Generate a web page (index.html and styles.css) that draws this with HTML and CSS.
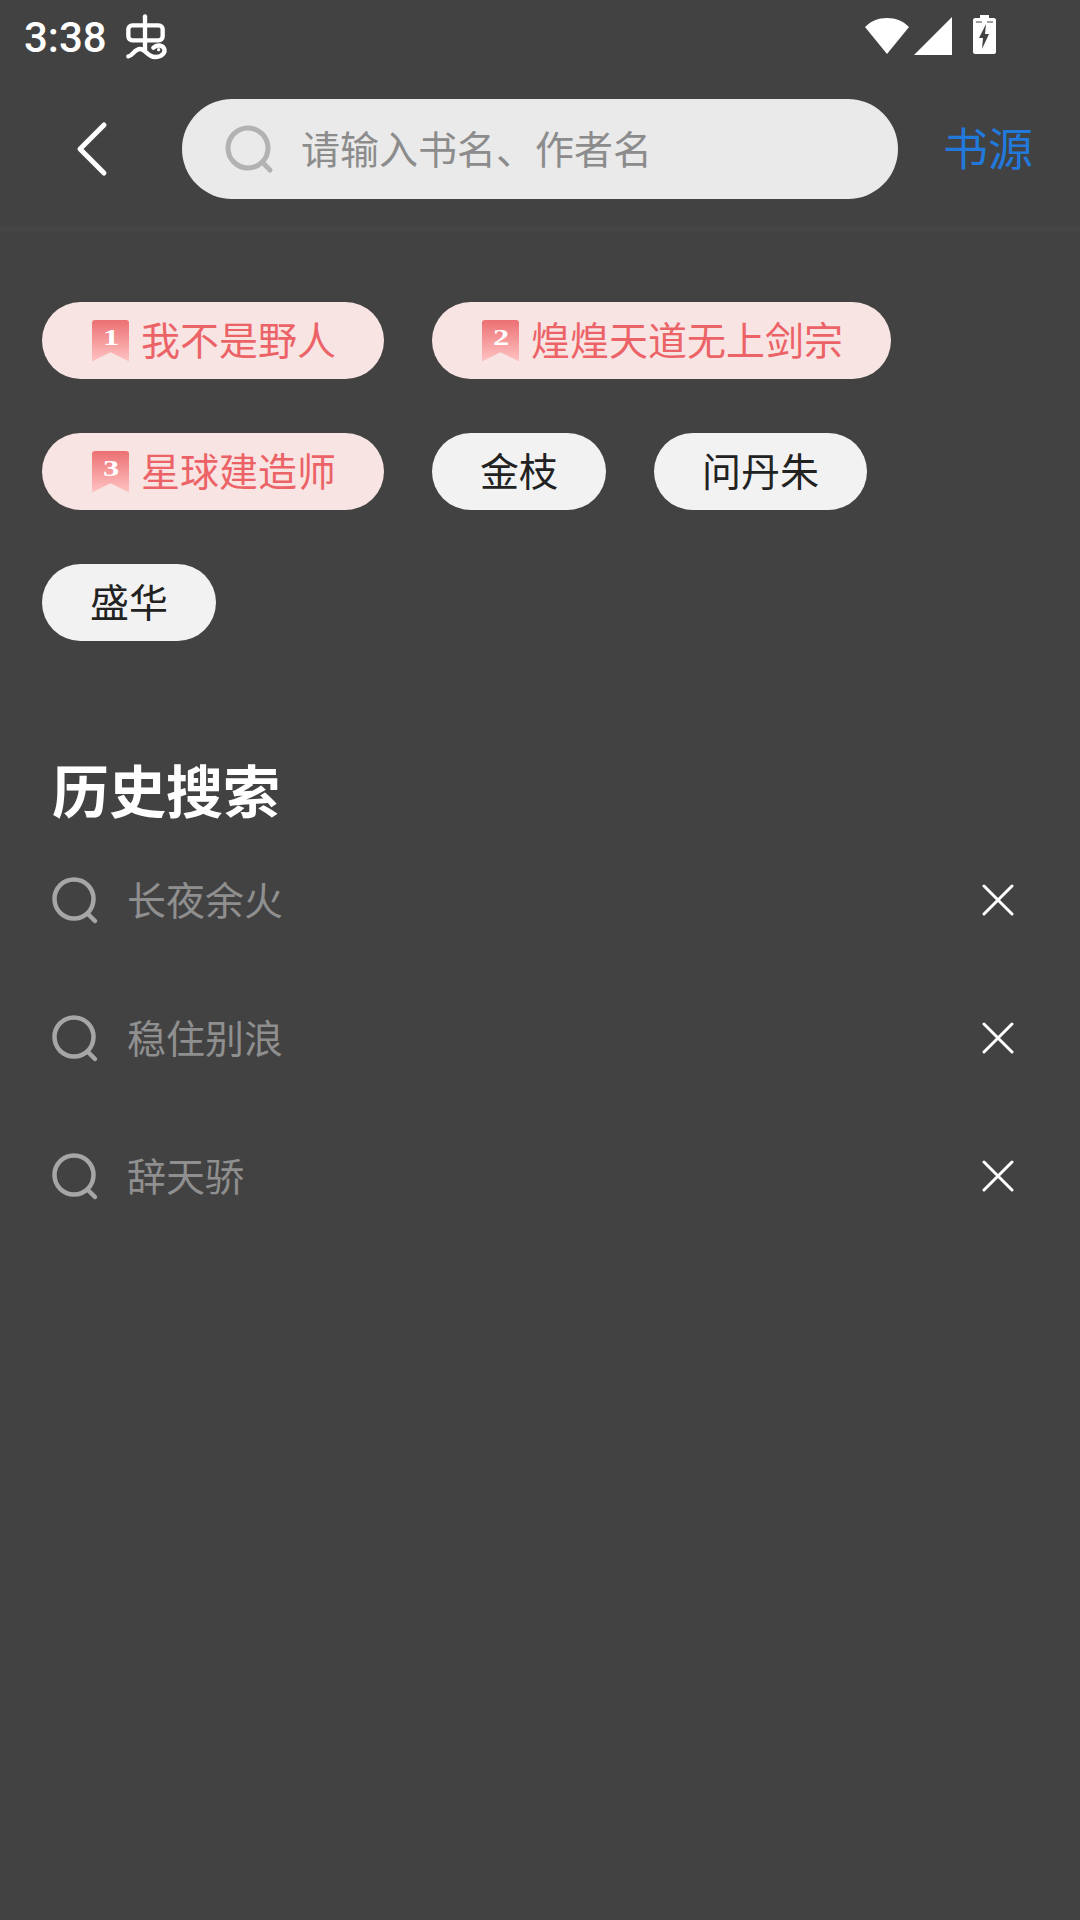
FILE: index.html
```html
<!DOCTYPE html>
<html lang="zh-CN">

<head>
    <meta charset="UTF-8">
    <meta name="viewport" content="width=device-width, initial-scale=1.0">
    <title>搜索</title>
    <link rel="stylesheet" href="styles.css">
</head>

<body>
    <div class="status-bar">
        <span class="clock">3:38</span>
        <svg class="bug-icon" viewBox="0 0 180 180" width="60" height="60" fill="none" stroke="#fff" stroke-width="13" stroke-linecap="round" stroke-linejoin="round">
            <rect x="55" y="55" width="103" height="45" rx="12"/>
            <path d="M105 28V128"/>
            <path d="M55 148C68 146 74 126 90 126C108 126 112 150 135 150C156 150 168 136 162 124C157 114 140 112 130 122"/>
            <circle cx="146" cy="128" r="3" fill="#fff" stroke-width="4"/>
        </svg>
        <div class="status-icons">
            <svg width="46" height="40" viewBox="0 0 46 40" fill="#fff">
                <path d="M1 11C7 5 14 2 23 2C32 2 39 5 45 11L23 38Z"/>
            </svg>
            <svg width="38" height="38" viewBox="0 0 38 38" fill="#fff">
                <path d="M38 0V38H0Z"/>
            </svg>
            <svg class="battery" width="23" height="39" viewBox="0 0 23 39">
                <path fill="#fff" d="M7 0H16V3H21C22 3 23 4 23 5V37C23 38 22 39 21 39H2C1 39 0 38 0 37V5C0 4 1 3 2 3H7Z"/>
                <path fill="#424242" d="M13 9L6 23H10L9 34L16 19H12Z"/>
                <path stroke="#424242" stroke-width="1" d="M3 7H9M14 7H20"/>
            </svg>
        </div>
    </div>

    <header class="search-header">
        <svg class="back-icon" width="34" height="56" viewBox="0 0 34 56" fill="none" stroke="#fff" stroke-width="5" stroke-linecap="round" stroke-linejoin="round">
            <path d="M29 4L5 28L29 52"/>
        </svg>
        <div class="search-box">
            <svg width="50" height="50" viewBox="0 0 50 50" fill="none" stroke="#b2b2b2" stroke-width="5" stroke-linecap="round">
                <circle cx="24" cy="24" r="20"/>
                <path d="M39 39L46 46"/>
            </svg>
            <span class="search-placeholder">请输入书名、作者名</span>
        </div>
        <span class="source-link">书源</span>
    </header>
    <div class="header-shadow"></div>

    <section class="hot-list">
        <span class="chip chip-rank"><span class="rank"><b>1</b></span>我不是野人</span>
        <span class="chip chip-rank"><span class="rank"><b>2</b></span>煌煌天道无上剑宗</span>
        <span class="chip chip-rank"><span class="rank"><b>3</b></span>星球建造师</span>
        <span class="chip">金枝</span>
        <span class="chip">问丹朱</span>
        <span class="chip">盛华</span>
    </section>

    <h2 class="history-title">历史搜索</h2>
    <ul class="history-list">
        <li class="history-row">
            <svg width="50" height="50" viewBox="0 0 50 50" fill="none" stroke="#a6a6a6" stroke-width="4.5" stroke-linecap="round">
                <circle cx="25" cy="24" r="19.5"/>
                <path d="M39 39L46 46"/>
            </svg>
            <span class="history-text">长夜余火</span>
            <svg class="close-icon" width="32" height="32" viewBox="0 0 32 32" stroke="#fff" stroke-width="3" stroke-linecap="round">
                <path d="M2 2L30 30M30 2L2 30"/>
            </svg>
        </li>
        <li class="history-row">
            <svg width="50" height="50" viewBox="0 0 50 50" fill="none" stroke="#a6a6a6" stroke-width="4.5" stroke-linecap="round">
                <circle cx="25" cy="24" r="19.5"/>
                <path d="M39 39L46 46"/>
            </svg>
            <span class="history-text">稳住别浪</span>
            <svg class="close-icon" width="32" height="32" viewBox="0 0 32 32" stroke="#fff" stroke-width="3" stroke-linecap="round">
                <path d="M2 2L30 30M30 2L2 30"/>
            </svg>
        </li>
        <li class="history-row">
            <svg width="50" height="50" viewBox="0 0 50 50" fill="none" stroke="#a6a6a6" stroke-width="4.5" stroke-linecap="round">
                <circle cx="25" cy="24" r="19.5"/>
                <path d="M39 39L46 46"/>
            </svg>
            <span class="history-text">辞天骄</span>
            <svg class="close-icon" width="32" height="32" viewBox="0 0 32 32" stroke="#fff" stroke-width="3" stroke-linecap="round">
                <path d="M2 2L30 30M30 2L2 30"/>
            </svg>
        </li>
    </ul>
</body>

</html>
```

FILE: styles.css
```css
html,
body {
    margin: 0;
    padding: 0;
}

body {
    width: 1080px;
    height: 1920px;
    overflow: hidden;
    background-color: #424242;
    font-family: "Noto Sans CJK SC", "Noto Sans", sans-serif;
}

.status-bar {
    display: flex;
    align-items: center;
    height: 72px;
    padding-left: 24px;
    box-sizing: border-box;
}

.clock {
    margin-top: 3px;
    font-family: Roboto, sans-serif;
    font-size: 42px;
    font-weight: 500;
    line-height: 72px;
    color: #fff;
}

.bug-icon {
    margin-left: 3px;
    margin-top: 2px;
}

.status-icons {
    display: flex;
    align-items: center;
    gap: 4px;
    margin-left: auto;
    margin-right: 84px;
}

.battery {
    margin-left: 17px;
    margin-top: -3px;
}

.search-header {
    display: flex;
    align-items: center;
    height: 154px;
}

.back-icon {
    margin-left: 75px;
}

.search-box {
    display: flex;
    align-items: center;
    width: 716px;
    height: 100px;
    margin-left: 73px;
    padding-left: 42px;
    box-sizing: border-box;
    background-color: #eaeaea;
    border-radius: 50px;
}

.search-placeholder {
    margin-left: 27px;
    margin-bottom: 5px;
    font-size: 39px;
    line-height: 50px;
    color: #8c8c8c;
}

.source-link {
    margin-left: 45px;
    margin-bottom: 5px;
    font-size: 45px;
    line-height: 50px;
    color: #2279dc;
}

.header-shadow {
    height: 8px;
    background: linear-gradient(#474747, #424242);
}

.hot-list {
    display: flex;
    flex-wrap: wrap;
    gap: 54px 48px;
    padding: 68px 42px 0;
}

.chip {
    display: flex;
    align-items: center;
    height: 77px;
    padding: 0 48px 6px;
    box-sizing: border-box;
    border-radius: 39px;
    background-color: #f2f2f2;
    font-size: 39px;
    color: #222;
}

.chip-rank {
    background-color: #f9e4e4;
    color: #ec6367;
}

.rank {
    display: flex;
    justify-content: center;
    width: 37px;
    height: 42px;
    margin: 6px 12px 0 2px;
    border-radius: 3px 3px 0 0;
    background: linear-gradient(#ec7073, #ffc4c4);
    clip-path: polygon(0 0, 100% 0, 100% 100%, 50% 78%, 0 100%);
    color: #fff;
    font-family: "Liberation Serif", serif;
    font-size: 24px;
    line-height: 35px;
}

.rank b {
    transform: scaleX(1.35);
}

.history-title {
    margin: 112px 0 0 52px;
    font-size: 57px;
    font-weight: 700;
    line-height: 70px;
    color: #fff;
}

.history-list {
    margin: 8px 0 0;
    padding: 0 0 0 49px;
    list-style: none;
}

.history-row {
    display: flex;
    align-items: center;
    height: 138px;
}

.history-text {
    margin-left: 28px;
    margin-bottom: 5px;
    font-size: 39px;
    color: #8f8f8f;
}

.close-icon {
    margin-left: auto;
    margin-right: 66px;
}
```
